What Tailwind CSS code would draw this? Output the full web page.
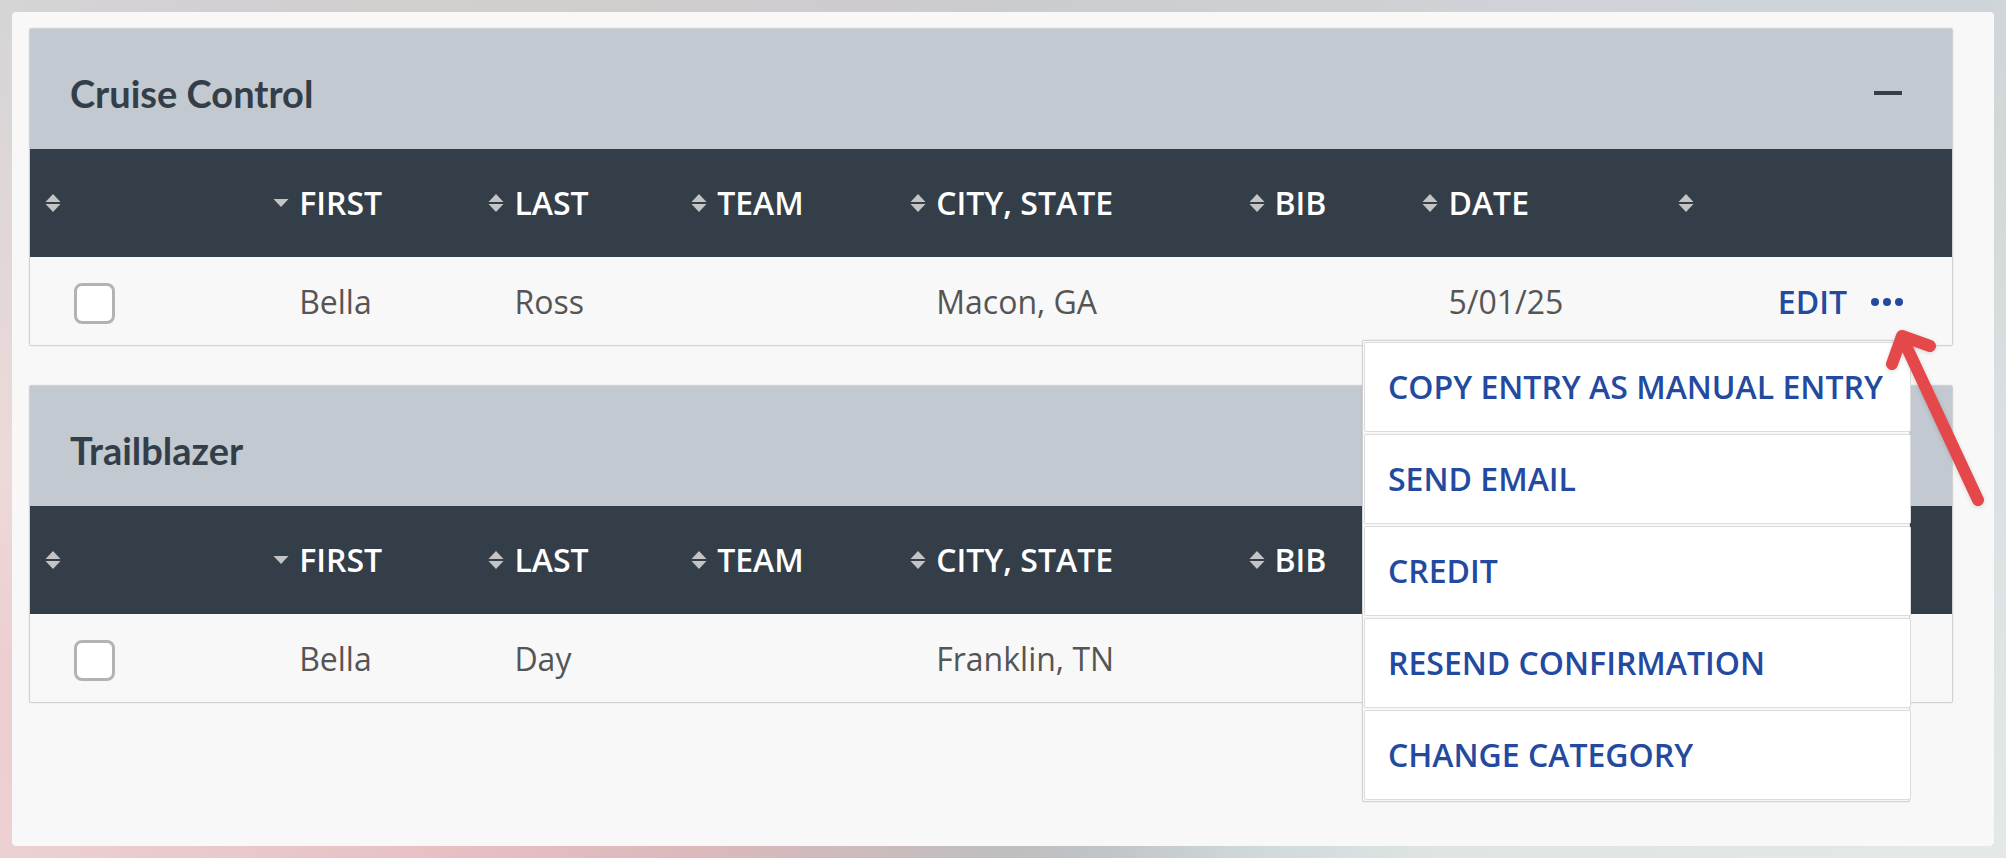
<!DOCTYPE html>
<html lang="en">
<head>
<meta charset="utf-8">
<title>Entries</title>
<script src="https://cdn.jsdelivr.net/npm/@tailwindcss/browser@4"></script>
</head>
<body class="min-h-screen flex p-3 text-[32px] leading-[44px] text-[#555] font-['Open_Sans',sans-serif] bg-[linear-gradient(to_right,#d5d5d5,#d4cfd4_10%,#d1cfcb_25%,#cfcbcf_40%,#cbcccd_50%,#d0d2d7_75%,#cdd5d8)] relative isolate overflow-hidden">
<div class="absolute -z-10 left-0 inset-y-0 w-3 bg-[linear-gradient(to_bottom,#d5d5d5,#e2d7d8_30%,#edd9d9_55%,#eccdd0_80%,#ecd1d2)]"></div>
<div class="absolute -z-10 right-0 inset-y-0 w-3 bg-[linear-gradient(to_bottom,#cfd5d9,#d1dad7_20%,#d8e0e2_50%,#e3e9e7)]"></div>
<div class="absolute -z-10 bottom-0 inset-x-0 h-3 bg-[linear-gradient(to_right,#ecd1d2,#e7c0c4_22%,#dcb8bb_35%,#bfbebe_50%,#c0c4c9_55%,#d0dadc_63%,#dfe5e4_72%,#e4e9e7)]"></div>

<svg class="hidden" aria-hidden="true">
  <symbol id="sort" viewBox="0 0 16 18"><path d="M8 0 15.500 8H.5ZM.5 10h15L8 18Z" fill="#c4c4c4"/></symbol>
  <symbol id="down" viewBox="0 0 16 18"><path d="M.5 5h15L8 13Z" fill="#c4c4c4"/></symbol>
</svg>

<main class="flex-1 rounded bg-[#f8f8f8] pt-4 pl-[17px] pr-[41px] flex flex-col gap-[39px]">

<section class="relative border border-[#d2d2d2] rounded-[2px] shadow-[0_0_2px_rgba(0,0,0,0.12)]">
  <header class="h-[120px] bg-[#c2c9d0] flex items-center justify-between pt-2 pl-10 pr-[50px]">
    <h2 class="text-[38px] font-bold text-[#343e48] font-['Lato',sans-serif]">Cruise Control</h2>
    <button aria-label="Collapse Cruise Control" class="py-3"><span class="block w-7 h-1 bg-[#343e48]"></span></button>
  </header>
  <table class="w-full table-fixed text-left">
    <colgroup><col class="w-[12.65%]"><col class="w-[11.2%]"><col class="w-[10.55%]"><col class="w-[11.4%]"><col class="w-[17.6%]"><col class="w-[9.05%]"><col class="w-[13.3%]"><col></colgroup>
    <thead class="bg-[#343e48] text-white">
      <tr class="h-[108px]">
        <th class="pl-[15px]"><button aria-label="Sort by selection" class="block"><svg class="w-4 h-[18px]"><use href="#sort"/></svg></button></th>
        <th class="font-semibold"><button class="flex items-center gap-2.5"><svg class="w-4 h-[18px]"><use href="#down"/></svg>FIRST</button></th>
        <th class="font-semibold"><button class="flex items-center gap-2.5"><svg class="w-4 h-[18px]"><use href="#sort"/></svg>LAST</button></th>
        <th class="font-semibold"><button class="flex items-center gap-2.5"><svg class="w-4 h-[18px]"><use href="#sort"/></svg>TEAM</button></th>
        <th class="font-semibold"><button class="flex items-center gap-2.5 whitespace-nowrap"><svg class="w-4 h-[18px]"><use href="#sort"/></svg>CITY, STATE</button></th>
        <th class="font-semibold"><button class="flex items-center gap-2.5"><svg class="w-4 h-[18px]"><use href="#sort"/></svg>BIB</button></th>
        <th class="font-semibold"><button class="flex items-center gap-2.5"><svg class="w-4 h-[18px]"><use href="#sort"/></svg>DATE</button></th>
        <th><button aria-label="Sort by actions" class="block"><svg class="w-4 h-[18px]"><use href="#sort"/></svg></button></th>
      </tr>
    </thead>
    <tbody>
      <tr class="h-[88px]">
        <td class="pl-11"><input type="checkbox" aria-label="Select Bella Ross" class="block mt-1 appearance-none size-[41px] rounded-lg border-3 border-[#b3b3b3] bg-white"></td>
        <td class="pl-[26px] pt-0.5">Bella</td>
        <td class="pl-[26px] pt-0.5">Ross</td>
        <td></td>
        <td class="pl-[26px] pt-0.5 whitespace-nowrap">Macon, GA</td>
        <td></td>
        <td class="pl-[26px] pt-0.5">5/01/25</td>
        <td class="pr-[49px] pt-0.5">
          <div class="flex items-center justify-end gap-6 text-[#234a9f]">
            <a href="#" class="font-semibold">EDIT</a>
            <button aria-label="More actions" aria-expanded="true"><svg class="block w-8 h-2" viewBox="0 0 32 8" fill="currentColor"><circle cx="4" cy="4" r="4"/><circle cx="16" cy="4" r="4"/><circle cx="28" cy="4" r="4"/></svg></button>
          </div>
        </td>
      </tr>
    </tbody>
  </table>

  <ul class="absolute z-10 top-[311px] right-[42px] w-[548px] bg-[#f8f8f8] border border-[#d2d2d2] rounded-[2px] shadow-[0_0_2px_rgba(0,0,0,0.12)] flex flex-col gap-0.5 pl-px py-px font-semibold text-[#234a9f] whitespace-nowrap">
    <li class="-mr-0.5"><a href="#" class="block h-[90px] pt-[22px] pl-[23px] bg-white border border-[#dcdcdc] rounded-[2px]">COPY ENTRY AS MANUAL ENTRY</a></li>
    <li class="-mr-0.5"><a href="#" class="block h-[90px] pt-[22px] pl-[23px] bg-white border border-[#dcdcdc] rounded-[2px]">SEND EMAIL</a></li>
    <li class="-mr-0.5"><a href="#" class="block h-[90px] pt-[22px] pl-[23px] bg-white border border-[#dcdcdc] rounded-[2px]">CREDIT</a></li>
    <li class="-mr-0.5"><a href="#" class="block h-[90px] pt-[22px] pl-[23px] bg-white border border-[#dcdcdc] rounded-[2px]">RESEND CONFIRMATION</a></li>
    <li class="-mr-0.5"><a href="#" class="block h-[90px] pt-[22px] pl-[23px] bg-white border border-[#dcdcdc] rounded-[2px]">CHANGE CATEGORY</a></li>
  </ul>

  <svg class="absolute z-20 top-[295px] -right-[38px] w-[110px] h-[190px] drop-shadow-sm pointer-events-none" viewBox="0 0 110 190" fill="none" stroke="#e5484b" stroke-width="12" stroke-linecap="round" stroke-linejoin="round" aria-hidden="true"><path d="M98 176 22 13M12 40 22 12 50 22"/></svg>
</section>

<section class="relative border border-[#d2d2d2] rounded-[2px] shadow-[0_0_2px_rgba(0,0,0,0.12)]">
  <header class="h-[120px] bg-[#c2c9d0] flex items-center justify-between pt-2 pl-10 pr-[50px]">
    <h2 class="text-[38px] font-bold text-[#343e48] font-['Lato',sans-serif]">Trailblazer</h2>
  </header>
  <table class="w-full table-fixed text-left">
    <colgroup><col class="w-[12.65%]"><col class="w-[11.2%]"><col class="w-[10.55%]"><col class="w-[11.4%]"><col class="w-[17.6%]"><col class="w-[9.05%]"><col class="w-[13.3%]"><col></colgroup>
    <thead class="bg-[#343e48] text-white">
      <tr class="h-[108px]">
        <th class="pl-[15px]"><button aria-label="Sort by selection" class="block"><svg class="w-4 h-[18px]"><use href="#sort"/></svg></button></th>
        <th class="font-semibold"><button class="flex items-center gap-2.5"><svg class="w-4 h-[18px]"><use href="#down"/></svg>FIRST</button></th>
        <th class="font-semibold"><button class="flex items-center gap-2.5"><svg class="w-4 h-[18px]"><use href="#sort"/></svg>LAST</button></th>
        <th class="font-semibold"><button class="flex items-center gap-2.5"><svg class="w-4 h-[18px]"><use href="#sort"/></svg>TEAM</button></th>
        <th class="font-semibold"><button class="flex items-center gap-2.5 whitespace-nowrap"><svg class="w-4 h-[18px]"><use href="#sort"/></svg>CITY, STATE</button></th>
        <th class="font-semibold"><button class="flex items-center gap-2.5"><svg class="w-4 h-[18px]"><use href="#sort"/></svg>BIB</button></th>
        <th></th>
        <th></th>
      </tr>
    </thead>
    <tbody>
      <tr class="h-[88px]">
        <td class="pl-11"><input type="checkbox" aria-label="Select Bella Day" class="block mt-1 appearance-none size-[41px] rounded-lg border-3 border-[#b3b3b3] bg-white"></td>
        <td class="pl-[26px] pt-0.5">Bella</td>
        <td class="pl-[26px] pt-0.5">Day</td>
        <td></td>
        <td class="pl-[26px] pt-0.5 whitespace-nowrap">Franklin, TN</td>
        <td></td>
        <td></td>
        <td></td>
      </tr>
    </tbody>
  </table>
</section>
</main>
</body>
</html>
